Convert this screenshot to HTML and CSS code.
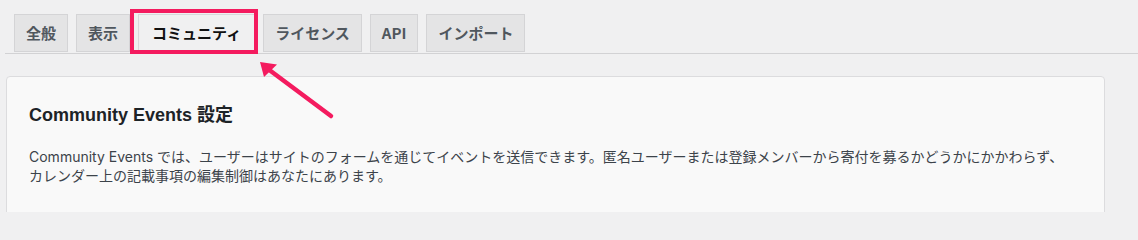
FILE: index.html
```html
<!DOCTYPE html>
<html lang="ja">
<head>
<meta charset="utf-8">
<title>Community Events 設定</title>
<link rel="stylesheet" href="styles.css">
</head>
<body>
<div class="page">
  <nav class="tabs">
    <a class="tab">全般</a>
    <a class="tab">表示</a>
    <a class="tab active">コミュニティ<span class="highlight"></span></a>
    <a class="tab">ライセンス</a>
    <a class="tab">API</a>
    <a class="tab">インポート</a>
  </nav>
  <section class="card">
    <h2 class="card-title">Community Events 設定</h2>
    <p class="card-text">Community Events では、ユーザーはサイトのフォームを通じてイベントを送信できます。匿名ユーザーまたは登録メンバーから寄付を募るかどうかにかかわらず、カレンダー上の記載事項の編集制御はあなたにあります。</p>
  </section>
  <svg class="arrow" width="1138" height="212" viewBox="0 0 1138 212" aria-hidden="true">
    <line x1="268" y1="69" x2="331" y2="116" stroke="#f41b5f" stroke-width="4.5" stroke-linecap="round"/>
    <polygon points="260,62 277,64.5 264,77" fill="#f41b5f"/>
  </svg>
</div>
</body>
</html>
```

FILE: styles.css
```css
html, body {
  margin: 0;
  padding: 0;
  background: #f0f0f1;
}

.page {
  position: relative;
  width: 1138px;
  height: 212px;
  overflow: hidden;
  font-family: "Liberation Sans", "Noto Sans CJK JP", sans-serif;
}

.tabs {
  display: flex;
  align-items: flex-end;
  gap: 8px;
  margin-left: 5px;
  padding: 14px 0 0 9px;
  border-bottom: 1px solid #d2d2d4;
}

.tab {
  position: relative;
  box-sizing: border-box;
  height: 38px;
  margin-bottom: 1px;
  padding: 0 11px;
  border: 1px solid #d4d4d6;
  background: #e4e4e5;
  color: #50575e;
  font-family: "Noto Sans CJK JP", sans-serif;
  font-weight: 700;
  font-size: 15px;
  line-height: 36px;
  white-space: nowrap;
  text-decoration: none;
}

.tab.active {
  padding: 0 13px;
  background: #f0f0f1;
  color: #111;
  border-color: #d8d8da;
}

.highlight {
  position: absolute;
  left: -9px;
  right: -4px;
  top: -6px;
  height: 45px;
  box-sizing: border-box;
  border: 4px solid #f41b5f;
}

.card {
  box-sizing: border-box;
  width: 1099px;
  height: 160px;
  margin: 22px 0 0 6px;
  padding: 26px 30px 0 22px;
  background: #f9f9f9;
  border: 1px solid #dcdcde;
  border-radius: 4px;
}

.card-title {
  margin: 0;
  font-family: "Liberation Sans", "Noto Sans CJK JP", sans-serif;
  font-size: 18px;
  font-weight: 700;
  line-height: 24px;
  color: #1d2327;
}

.card-text {
  margin: 20px 0 0;
  font-family: "Inter", "Noto Sans CJK JP", sans-serif;
  font-size: 14px;
  line-height: 19px;
  color: #3c434a;
}

.arrow {
  position: absolute;
  left: 0;
  top: 0;
  pointer-events: none;
}
```
